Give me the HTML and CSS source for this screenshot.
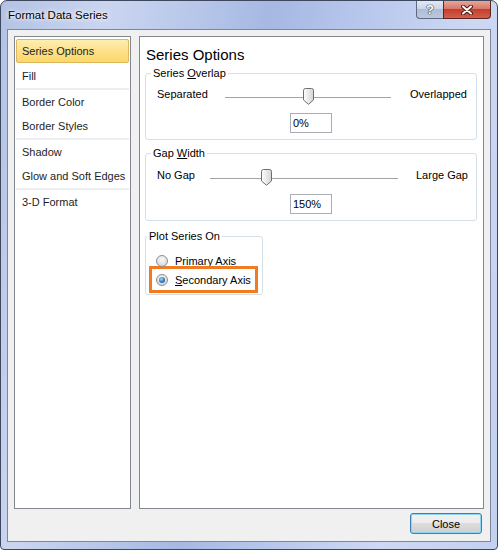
FILE: index.html
```html
<!DOCTYPE html>
<html lang="en">
<head>
    <meta charset="UTF-8">
    <title>Format Data Series</title>
    <link rel="stylesheet" href="styles.css">
</head>
<body>
<div class="window">
    <div class="titlebar">
        <span class="title">Format Data Series</span>
        <div class="caption-buttons">
            <span class="cap-btn help">?</span>
            <span class="cap-btn close">
                <svg width="12" height="10" viewBox="0 0 12 10">
                    <path d="M2 1.5 L10 8.5 M10 1.5 L2 8.5" stroke="#4a1a14" stroke-width="4" stroke-linecap="round"/>
                    <path d="M2 1.5 L10 8.5 M10 1.5 L2 8.5" stroke="#fff" stroke-width="2" stroke-linecap="round"/>
                </svg>
            </span>
        </div>
    </div>
    <div class="client">
        <div class="panes">
            <ul class="nav">
                <li class="nav-item selected">Series Options</li>
                <li class="nav-item">Fill</li>
                <li class="nav-sep"></li>
                <li class="nav-item">Border Color</li>
                <li class="nav-item">Border Styles</li>
                <li class="nav-sep"></li>
                <li class="nav-item">Shadow</li>
                <li class="nav-item">Glow and Soft Edges</li>
                <li class="nav-sep"></li>
                <li class="nav-item">3-D Format</li>
            </ul>
            <div class="content">
                <h2>Series Options</h2>

                <fieldset class="group overlap">
                    <legend>Series <u>O</u>verlap</legend>
                    <div class="slider-row">
                        <span class="end-label first">Separated</span>
                        <div class="slider">
                            <span class="thumb" style="left: 50%">
                                <svg width="11" height="17" viewBox="0 0 11 17">
                                    <defs>
                                        <linearGradient id="tg1" x1="0" y1="0" x2="1" y2="0">
                                            <stop offset="0" stop-color="#ffffff"/>
                                            <stop offset="1" stop-color="#d4d4d4"/>
                                        </linearGradient>
                                    </defs>
                                    <path d="M0.5 2.5 Q0.5 0.5 2.5 0.5 H8.5 Q10.5 0.5 10.5 2.5 V12 L5.5 16.3 L0.5 12 Z" fill="url(#tg1)" stroke="#6f6f6f"/>
                                </svg>
                            </span>
                        </div>
                        <span class="end-label last">Overlapped</span>
                    </div>
                    <div class="value-row"><span class="textbox">0%</span></div>
                </fieldset>

                <fieldset class="group gap">
                    <legend>Gap <u>W</u>idth</legend>
                    <div class="slider-row">
                        <span class="end-label first">No Gap</span>
                        <div class="slider">
                            <span class="thumb" style="left: 30%">
                                <svg width="11" height="17" viewBox="0 0 11 17">
                                    <defs>
                                        <linearGradient id="tg2" x1="0" y1="0" x2="1" y2="0">
                                            <stop offset="0" stop-color="#ffffff"/>
                                            <stop offset="1" stop-color="#d4d4d4"/>
                                        </linearGradient>
                                    </defs>
                                    <path d="M0.5 2.5 Q0.5 0.5 2.5 0.5 H8.5 Q10.5 0.5 10.5 2.5 V12 L5.5 16.3 L0.5 12 Z" fill="url(#tg2)" stroke="#6f6f6f"/>
                                </svg>
                            </span>
                        </div>
                        <span class="end-label last">Large Gap</span>
                    </div>
                    <div class="value-row"><span class="textbox">150%</span></div>
                </fieldset>

                <fieldset class="group plot">
                    <legend>Plot Series On</legend>
                    <div class="radio-row">
                        <span class="radio"></span>
                        <span><u>P</u>rimary Axis</span>
                    </div>
                    <div class="radio-row marked">
                        <span class="radio checked"></span>
                        <span><u>S</u>econdary Axis</span>
                    </div>
                </fieldset>
            </div>
        </div>
        <div class="footer">
            <button class="close-btn">Close</button>
        </div>
    </div>
</div>
</body>
</html>
```

FILE: styles.css
```css
body {
    margin: 0;
    font-family: "Liberation Sans", Arial, sans-serif;
    font-size: 11px;
    color: #000;
    background: #fff;
}

/* window frame */
.window {
    width: 498px;
    height: 550px;
    box-sizing: border-box;
    border: 1px solid #3d475e;
    border-radius: 7px 7px 4px 4px;
    padding: 0 6px 7px;
    display: flex;
    flex-direction: column;
    background:
        linear-gradient(100deg, #b3c2e4 0%, #cad5f0 18%, #b9c8ea 32%, #a6b8e3 46%, #b8c7ec 62%, #cdd8f3 80%, #c4d0f0 100%);
}
.titlebar {
    height: 28px;
    display: flex;
    justify-content: space-between;
    align-items: flex-start;
}
.title {
    padding-left: 1px;
    line-height: 29px;
    font-size: 11.5px;
    color: #000;
    text-shadow: 0 0 6px #fff, 0 0 3px #fff;
}
.caption-buttons {
    display: flex;
}
.cap-btn {
    height: 18px;
    box-sizing: border-box;
    display: flex;
    align-items: center;
    justify-content: center;
    border: 1px solid #5d6a82;
    border-top: none;
}
.help {
    width: 27px;
    border-right: none;
    border-radius: 0 0 0 4px;
    background: linear-gradient(#e2e8f3, #ccd6e8 45%, #aebcd6 50%, #bcc8df);
    color: #fff;
    font-size: 13px;
    font-weight: bold;
    text-shadow: 0 0 1px #2d3a52, 0 0 1px #2d3a52, 0 0 1px #2d3a52;
}
.close {
    width: 48px;
    border-color: #5a2620;
    border-radius: 0 0 4px 0;
    background: linear-gradient(#e9a698, #d7786a 45%, #c43e2d 50%, #d25f4c);
}

/* client area */
.client {
    flex: 1;
    border: 1px solid #7c879e;
    background: #f0f0f0;
    padding: 6px 6px 7px;
    display: flex;
    flex-direction: column;
}
.panes {
    display: flex;
    gap: 8px;
    height: 473px;
}

.nav {
    flex-shrink: 0;
    width: 117px;
    box-sizing: border-box;
    margin: 0;
    padding: 2px 1px;
    list-style: none;
    background: #fff;
    border: 1px solid #828790;
}
.nav-item {
    height: 24px;
    line-height: 22px;
    box-sizing: border-box;
    border: 1px solid transparent;
    padding-left: 5px;
    white-space: nowrap;
    color: #1e1e1e;
}
.nav-item.selected {
    margin-bottom: 1px;
    border-color: #dcb75c;
    border-radius: 2px;
    background: linear-gradient(#fdeeb2, #fde08a 50%, #fcd768);
}
.nav-sep {
    height: 2px;
    background: #eceef2;
}

.content {
    flex: 1;
    min-width: 0;
    background: #fff;
    border: 1px solid #828790;
    padding: 8px 6px 0 5px;
}
.content h2 {
    margin: 0 0 1px 1px;
    font-size: 15px;
    font-weight: normal;
    line-height: 20px;
}

/* group boxes */
.group {
    margin: 0;
    min-width: 0;
    padding: 4px 11px 6px;
    border: 1px solid #d5dfe5;
    border-radius: 3px;
}
.group legend {
    margin-left: -6px;
    padding: 0 2px;
    line-height: 14px;
}
.group.gap {
    margin-top: 6px;
    padding-top: 5px;
}
.group.plot {
    width: 118px;
    box-sizing: border-box;
    margin-top: 8px;
    padding: 8px 7px 5px;
}

.slider-row {
    display: flex;
    align-items: center;
    height: 20px;
    white-space: nowrap;
}
.end-label {
    flex-shrink: 0;
}
.slider {
    flex-shrink: 0;
    position: relative;
    height: 20px;
}
.slider::before {
    content: "";
    position: absolute;
    left: 0;
    right: 0;
    top: 13px;
    height: 1px;
    background: #a3a3a3;
}
.thumb {
    position: absolute;
    top: 4px;
    width: 11px;
    height: 17px;
    margin-left: -5px;
}
.thumb svg {
    display: block;
}
.overlap .end-label.first { width: 68px; }
.overlap .slider { width: 166px; }
.overlap .end-label.last { margin-left: 19px; }
.gap .end-label.first { width: 53px; }
.gap .slider { width: 188px; }
.gap .end-label.last { margin-left: 18px; }

.value-row {
    margin-top: 9px;
    padding-left: 133px;
    height: 20px;
}
.textbox {
    display: block;
    width: 42px;
    height: 20px;
    box-sizing: border-box;
    border: 1px solid #a9aeb6;
    padding-left: 2px;
    line-height: 18px;
}

/* radio buttons */
.radio-row {
    display: flex;
    align-items: center;
    gap: 7px;
    width: fit-content;
    height: 19px;
    padding: 0 3px;
    white-space: nowrap;
}
.radio-row.marked {
    outline: 3px solid #f07b22;
    outline-offset: 1px;
}
.radio {
    width: 12px;
    height: 12px;
    box-sizing: border-box;
    border-radius: 50%;
    border: 1px solid #8c8e90;
    background: radial-gradient(circle at 50% 35%, #fafafa 0, #e2e2e2 55%, #cacaca 100%);
    position: relative;
}
.radio.checked::after {
    content: "";
    position: absolute;
    left: 2px;
    top: 2px;
    width: 6px;
    height: 6px;
    border-radius: 50%;
    background: radial-gradient(circle at 40% 35%, #a8dcf8 0, #3f8ac4 45%, #123e66 100%);
}

/* footer */
.footer {
    display: flex;
    justify-content: flex-end;
    margin-top: 4px;
    padding-right: 2px;
}
.close-btn {
    width: 72px;
    height: 21px;
    padding: 0;
    font-family: inherit;
    font-size: 11px;
    color: #000;
    border: 1px solid #3c7fb1;
    border-radius: 3px;
    background: linear-gradient(#f2f2f2, #ebebeb 50%, #dddddd 50%, #cfcfcf);
    box-shadow: inset 0 0 0 1px #8fd6f6;
}
```
